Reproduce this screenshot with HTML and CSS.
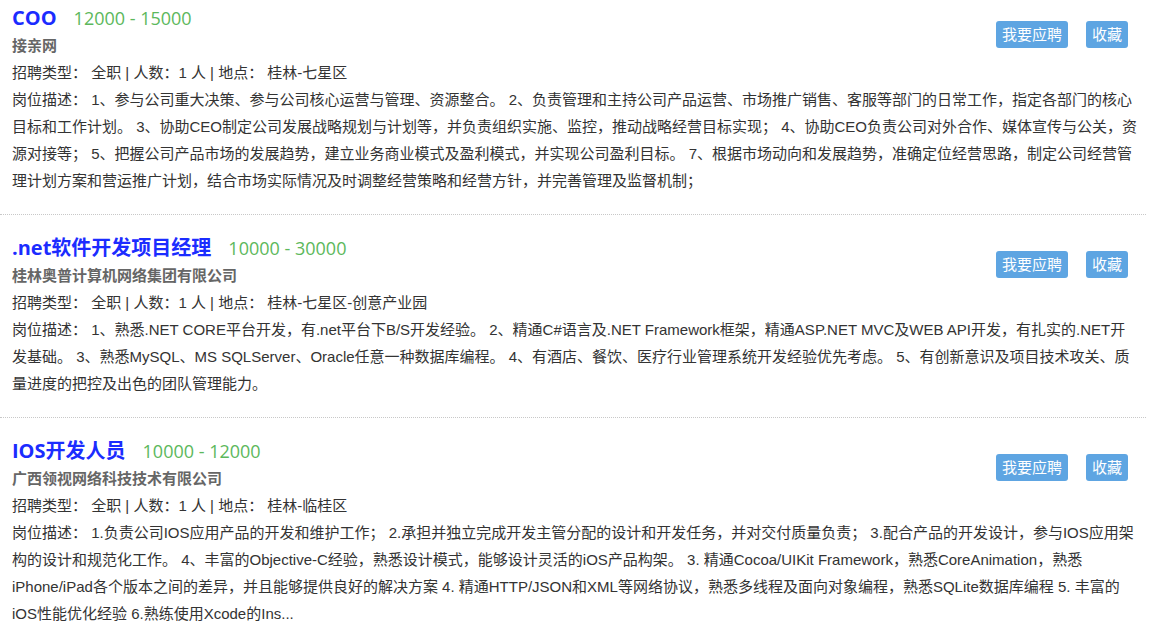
FILE: index.html
```html
<!DOCTYPE html>
<html lang="zh-CN">
<head>
<meta charset="utf-8">
<title>职位列表</title>
<link rel="stylesheet" href="styles.css">
</head>
<body>
<div class="job-list">
  <div class="job">
    <div class="job-head">
      <div class="job-main">
        <div class="job-title"><a class="job-name" href="#">COO</a><span class="salary">12000 - 15000</span></div>
        <div class="company">接亲网</div>
      </div>
      <div class="actions">
        <a class="btn" href="#">我要应聘</a>
        <a class="btn" href="#">收藏</a>
      </div>
    </div>
    <div class="meta">招聘类型： 全职 | 人数：1 人 | 地点： 桂林-七星区</div>
    <div class="desc">岗位描述： 1、参与公司重大决策、参与公司核心运营与管理、资源整合。 2、负责管理和主持公司产品运营、市场推广销售、客服等部门的日常工作，指定各部门的核心目标和工作计划。 3、协助CEO制定公司发展战略规划与计划等，并负责组织实施、监控，推动战略经营目标实现； 4、协助CEO负责公司对外合作、媒体宣传与公关，资源对接等； 5、把握公司产品市场的发展趋势，建立业务商业模式及盈利模式，并实现公司盈利目标。 7、根据市场动向和发展趋势，准确定位经营思路，制定公司经营管理计划方案和营运推广计划，结合市场实际情况及时调整经营策略和经营方针，并完善管理及监督机制；</div>
  </div>
  <div class="job">
    <div class="job-head">
      <div class="job-main">
        <div class="job-title"><a class="job-name" href="#">.net软件开发项目经理</a><span class="salary">10000 - 30000</span></div>
        <div class="company">桂林奥普计算机网络集团有限公司</div>
      </div>
      <div class="actions">
        <a class="btn" href="#">我要应聘</a>
        <a class="btn" href="#">收藏</a>
      </div>
    </div>
    <div class="meta">招聘类型： 全职 | 人数：1 人 | 地点： 桂林-七星区-创意产业园</div>
    <div class="desc">岗位描述： 1、熟悉.NET CORE平台开发，有.net平台下B/S开发经验。 2、精通C#语言及.NET Framework框架，精通ASP.NET MVC及WEB API开发，有扎实的.NET开发基础。 3、熟悉MySQL、MS SQLServer、Oracle任意一种数据库编程。 4、有酒店、餐饮、医疗行业管理系统开发经验优先考虑。 5、有创新意识及项目技术攻关、质量进度的把控及出色的团队管理能力。</div>
  </div>
  <div class="job">
    <div class="job-head">
      <div class="job-main">
        <div class="job-title"><a class="job-name" href="#">IOS开发人员</a><span class="salary">10000 - 12000</span></div>
        <div class="company">广西领视网络科技技术有限公司</div>
      </div>
      <div class="actions">
        <a class="btn" href="#">我要应聘</a>
        <a class="btn" href="#">收藏</a>
      </div>
    </div>
    <div class="meta">招聘类型： 全职 | 人数：1 人 | 地点： 桂林-临桂区</div>
    <div class="desc">岗位描述： 1.负责公司IOS应用产品的开发和维护工作； 2.承担并独立完成开发主管分配的设计和开发任务，并对交付质量负责； 3.配合产品的开发设计，参与IOS应用架构的设计和规范化工作。 4、丰富的Objective-C经验，熟悉设计模式，能够设计灵活的iOS产品构架。 3. 精通Cocoa/UIKit Framework，熟悉CoreAnimation，熟悉iPhone/iPad各个版本之间的差异，并且能够提供良好的解决方案 4. 精通HTTP/JSON和XML等网络协议，熟悉多线程及面向对象编程，熟悉SQLite数据库编程 5. 丰富的iOS性能优化经验 6.熟练使用Xcode的Ins...</div>
  </div>
</div>
</body>
</html>
```

FILE: styles.css
```css
html, body {
  margin: 0;
  padding: 0;
  background: #ffffff;
}

body {
  font-family: "Liberation Sans", "Noto Sans CJK SC", sans-serif;
  font-size: 15px;
  color: #333333;
}

.job-list {
  width: 1146px;
}

.job {
  padding: 19px 6px 20px 12px;
  border-bottom: 1px dotted #c8c8c8;
}

.job:first-child {
  padding-top: 4px;
}

.job-head {
  display: flex;
  justify-content: space-between;
  align-items: flex-start;
}

.job-title {
  line-height: 28px;
  height: 28px;
  white-space: nowrap;
  font-family: "Open Sans", "Noto Sans CJK SC", sans-serif;
}

.job-name {
  font-size: 20px;
  font-weight: bold;
  color: #1b2cff;
  text-decoration: none;
}

.salary {
  font-size: 18px;
  color: #5cb85c;
  margin-left: 17px;
}

.company {
  font-size: 15px;
  font-weight: bold;
  color: #666666;
  line-height: 27px;
}

.actions {
  display: flex;
  gap: 18px;
  margin-top: 17px;
  margin-right: 12px;
}

.btn {
  display: block;
  height: 27px;
  line-height: 27px;
  padding: 0 6px;
  font-size: 15px;
  color: #ffffff;
  background: #5ea5e2;
  border-radius: 3px;
  text-decoration: none;
}

.meta,
.desc {
  line-height: 27px;
}
```
